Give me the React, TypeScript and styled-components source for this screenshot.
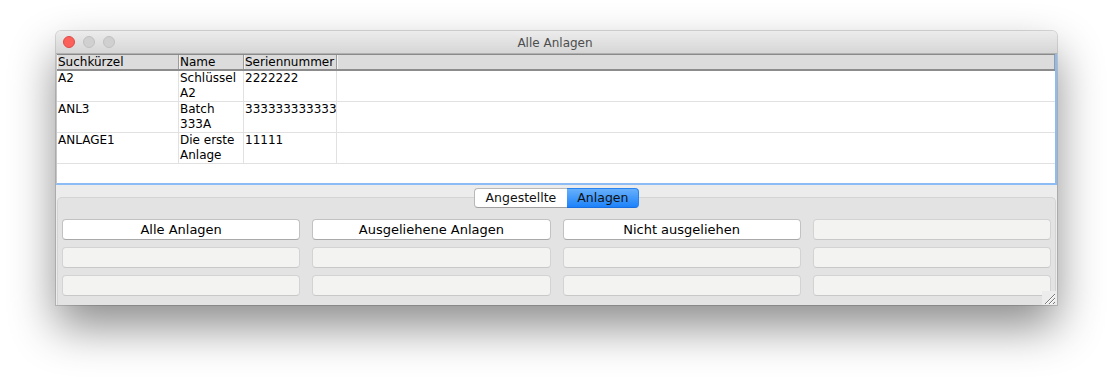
import React from 'react'
import styled, { createGlobalStyle } from 'styled-components'

const GlobalStyle = createGlobalStyle`
    html, body {
        margin: 0;
        padding: 0;
        background: #ffffff;
    }
    body {
        font-family: "DejaVu Sans", "Noto Sans", sans-serif;
        color: #000;
    }
`

const Page = styled.div`
    padding: 31px 0 0 56px;
    height: 385px;
    box-sizing: border-box;
`

const Window = styled.div`
    position: relative;
    width: 1001px;
    height: 274px;
    display: flex;
    flex-direction: column;
    background: #ececec;
    border-radius: 5px 5px 0 0;
    box-shadow: 0 0 0 1px rgba(0, 0, 0, 0.14), 0 22px 46px rgba(0, 0, 0, 0.45);
`

const TitleBar = styled.div`
    height: 22px;
    flex: none;
    display: flex;
    align-items: center;
    position: relative;
    background: linear-gradient(#ececec, #d6d6d6);
    border-bottom: 1px solid #b0b0b0;
    border-radius: 5px 5px 0 0;
`

const Lights = styled.div`
    display: flex;
    gap: 8px;
    padding-left: 7px;
    z-index: 1;
`

const Light = styled.span<{ $color: string; $edge: string }>`
    width: 12px;
    height: 12px;
    border-radius: 50%;
    box-sizing: border-box;
    background: ${({ $color }) => $color};
    border: 1px solid ${({ $edge }) => $edge};
`

const Title = styled.div`
    flex: 1;
    text-align: center;
    font-size: 12px;
    color: #4d4d4d;
    margin-left: -62px;
    padding-top: 1px;
`

const TableArea = styled.div`
    height: 131px;
    flex: none;
    background: #fff;
    border-left: 1px solid #c6c6c6;
    border-right: 2px solid #8dbbf3;
    border-bottom: 2px solid #8dbbf3;
    box-sizing: border-box;
    display: flex;
    flex-direction: column;
`

const Grid = styled.div`
    display: grid;
    grid-template-columns: 122px 65px 93px 1fr;
`

const HeaderRow = styled(Grid)`
    height: 17px;
    box-sizing: border-box;
    background: #dcdcdc;
    border-top: 1px solid #8a8a8a;
    border-bottom: 2px solid #8c8c8c;
`

const HeaderCell = styled.div`
    font-size: 12px;
    line-height: 14px;
    padding-left: 1px;
    border-right: 1px solid #9c9c9c;
    box-shadow: inset 1px 0 0 #f2f2f2;
    white-space: nowrap;
    overflow: hidden;
`

const BodyRow = styled(Grid)`
    height: 31px;
    box-sizing: border-box;
    border-bottom: 1px solid #e1e1e1;
`

const Cell = styled.div`
    font-size: 12px;
    line-height: 15px;
    padding-left: 1px;
    border-right: 1px solid #e1e1e1;
    white-space: pre-line;
    overflow: hidden;
`

const LastCell = styled.div``

const Lower = styled.div`
    flex: 1;
    display: flex;
    flex-direction: column;
    padding-top: 3px;
`

const TabBar = styled.div`
    display: flex;
    justify-content: center;
    position: relative;
    z-index: 1;
    height: 20px;
`

const Segment = styled.div<{ $active?: boolean }>`
    height: 20px;
    box-sizing: border-box;
    font-size: 12.5px;
    line-height: 18px;
    padding: 0 12px;
    color: #111;
    border: 1px solid ${({ $active }) => ($active ? '#2a84f0' : '#b8b8b8')};
    border-bottom-color: ${({ $active }) => ($active ? '#1a6fe0' : '#a0a0a0')};
    background: ${({ $active }) => ($active ? 'linear-gradient(#67b0fb, #1c82fa)' : '#ffffff')};
    border-radius: ${({ $active }) => ($active ? '0 4px 4px 0' : '4px 0 0 4px')};
    ${({ $active }) => ($active ? 'border-left: none; padding: 0 10px;' : 'border-right: none; padding: 0 11px;')}
`

const Pane = styled.div`
    flex: 1;
    margin: -11px 1px 0;
    padding: 21px 4px 0;
    background: #e3e3e3;
    border: 1px solid #d4d4d4;
    border-bottom: none;
    border-radius: 5px 5px 0 0;
`

const Buttons = styled.div`
    display: grid;
    grid-template-columns: repeat(4, 1fr);
    column-gap: 12px;
    row-gap: 7px;
`

const Button = styled.div<{ $empty?: boolean }>`
    height: 21px;
    box-sizing: border-box;
    border-radius: 4px;
    font-size: 13px;
    line-height: 19px;
    text-align: center;
    color: #000;
    background: ${({ $empty }) => ($empty ? '#f3f3f2' : '#ffffff')};
    border: 1px solid ${({ $empty }) => ($empty ? '#d3d3d3' : '#c2c2c2')};
    border-bottom-color: ${({ $empty }) => ($empty ? '#c8c8c8' : '#a9a9a9')};
`

const Grip = styled.svg`
    position: absolute;
    right: 1px;
    bottom: 0;
`

const rows = [
    ['A2', 'Schlüssel\nA2', '2222222'],
    ['ANL3', 'Batch\n333A', '333333333333'],
    ['ANLAGE1', 'Die erste\nAnlage', '11111'],
]

const buttons = [
    'Alle Anlagen', 'Ausgeliehene Anlagen', 'Nicht ausgeliehen', '',
    '', '', '', '',
    '', '', '', '',
]

const App = (): React.ReactElement => (
    <Page>
        <GlobalStyle />
        <Window>
            <TitleBar>
                <Lights>
                    <Light $color="#fc605b" $edge="#de4b46" />
                    <Light $color="#d0d0d0" $edge="#c1c1c1" />
                    <Light $color="#d0d0d0" $edge="#c1c1c1" />
                </Lights>
                <Title>Alle Anlagen</Title>
            </TitleBar>
            <TableArea>
                <HeaderRow>
                    <HeaderCell>Suchkürzel</HeaderCell>
                    <HeaderCell>Name</HeaderCell>
                    <HeaderCell>Seriennummer</HeaderCell>
                    <HeaderCell />
                </HeaderRow>
                {rows.map((row, index) => (
                    <BodyRow key={index}>
                        {row.map((value, i) => <Cell key={i}>{value}</Cell>)}
                        <LastCell />
                    </BodyRow>
                ))}
            </TableArea>
            <Lower>
                <TabBar>
                    <Segment>Angestellte</Segment>
                    <Segment $active>Anlagen</Segment>
                </TabBar>
                <Pane>
                    <Buttons>
                        {buttons.map((label, index) => (
                            <Button key={index} $empty={!label}>{label}</Button>
                        ))}
                    </Buttons>
                </Pane>
            </Lower>
            <Grip width="14" height="14" viewBox="0 0 14 14">
                <rect width="14" height="14" fill="#ececec" />
                <path d="M3 13 L13 3 M7 13 L13 7 M11 13 L13 11" stroke="#7a7a7a" strokeWidth="1" />
                <path d="M4 13 L13 4 M8 13 L13 8" stroke="#ffffff" strokeWidth="1" />
            </Grip>
        </Window>
    </Page>
)

export default App
